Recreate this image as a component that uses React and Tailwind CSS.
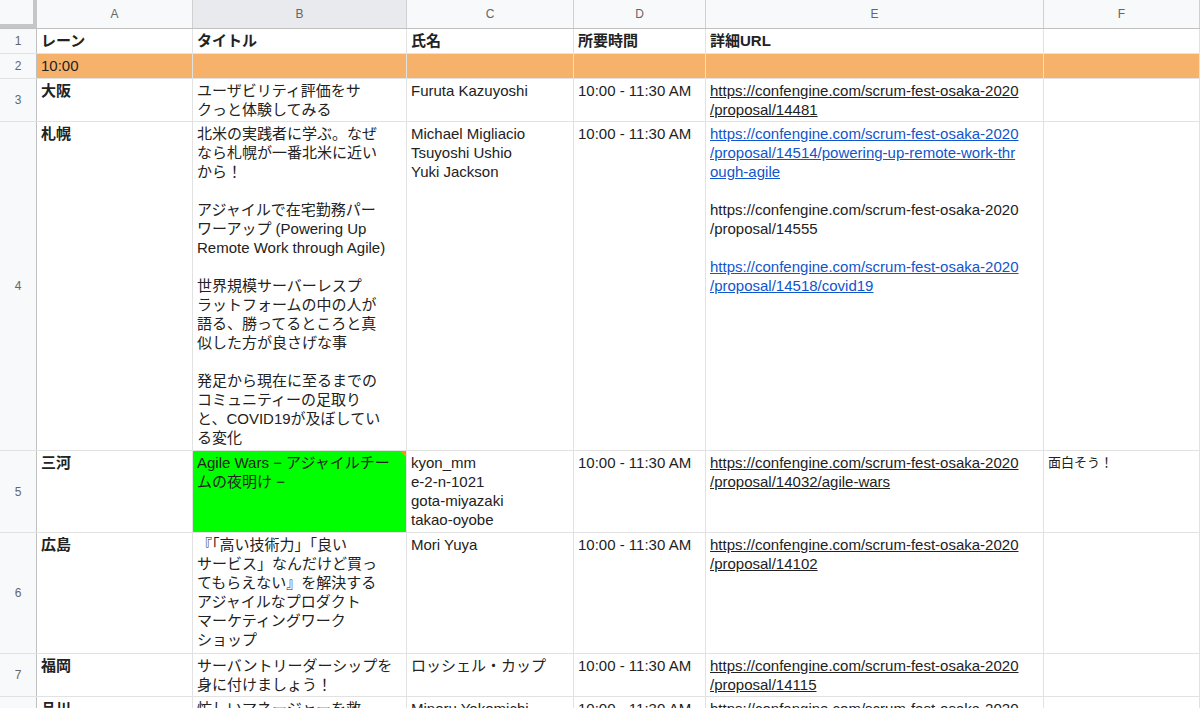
const F = { fontFamily: '"Liberation Sans", "Noto Sans CJK JP", sans-serif' };
const rows = [
  { n: 1, h: 25, cells: [["レーン"], ["タイトル"], ["氏名"], ["所要時間"], ["詳細URL"], [""]], bold: true },
  { n: 2, h: 25, orange: true, cells: [["10:00"], [""], [""], [""], [""], [""]] },
  { n: 3, h: 43, cells: [["大阪"], ["ユーザビリティ評価をサ", "クっと体験してみる"], ["Furuta Kazuyoshi"], ["10:00 - 11:30 AM"], [{ u: 1, t: "https://confengine.com/scrum-fest-osaka-2020" }, { u: 1, t: "/proposal/14481" }], [""]] },
  { n: 4, h: 329, cells: [["札幌"], ["北米の実践者に学ぶ。なぜ", "なら札幌が一番北米に近い", "から！", "", "アジャイルで在宅勤務パー", "ワーアップ (Powering Up", "Remote Work through Agile)", "", "世界規模サーバーレスプ", "ラットフォームの中の人が", "語る、勝ってるところと真", "似した方が良さげな事", "", "発足から現在に至るまでの", "コミュニティーの足取り", "と、COVID19が及ぼしてい", "る変化"], ["Michael Migliacio", "Tsuyoshi Ushio", "Yuki Jackson"], ["10:00 - 11:30 AM"], [{ b: 1, t: "https://confengine.com/scrum-fest-osaka-2020" }, { b: 1, t: "/proposal/14514/powering-up-remote-work-thr" }, { b: 1, t: "ough-agile" }, "", "https://confengine.com/scrum-fest-osaka-2020", "/proposal/14555", "", { b: 1, t: "https://confengine.com/scrum-fest-osaka-2020" }, { b: 1, t: "/proposal/14518/covid19" }], [""]] },
  { n: 5, h: 82, green: true, cells: [["三河"], ["Agile Wars − アジャイルチー", "ムの夜明け −"], ["kyon_mm", "e-2-n-1021", "gota-miyazaki", "takao-oyobe"], ["10:00 - 11:30 AM"], [{ u: 1, t: "https://confengine.com/scrum-fest-osaka-2020" }, { u: 1, t: "/proposal/14032/agile-wars" }], ["面白そう！"]] },
  { n: 6, h: 121, cells: [["広島"], ["『「高い技術力」「良い", "サービス」なんだけど買っ", "てもらえない』を解決する", "アジャイルなプロダクト", "マーケティングワーク", "ショップ"], ["Mori Yuya"], ["10:00 - 11:30 AM"], [{ u: 1, t: "https://confengine.com/scrum-fest-osaka-2020" }, { u: 1, t: "/proposal/14102" }], [""]] },
  { n: 7, h: 43, cells: [["福岡"], ["サーバントリーダーシップを", "身に付けましょう！"], ["ロッシェル・カップ"], ["10:00 - 11:30 AM"], [{ u: 1, t: "https://confengine.com/scrum-fest-osaka-2020" }, { u: 1, t: "/proposal/14115" }], [""]] },
  { n: 8, h: 43, cells: [["品川"], ["忙しいマネージャーを救"], ["Minoru Yokomichi"], ["10:00 - 11:30 AM"], [{ u: 1, t: "https://confengine.com/scrum-fest-osaka-2020" }], [""]] },
];
const widths = [156, 214, 167, 132, 338, 156];
const cols = ["A", "B", "C", "D", "E", "F"];

function Line({ l }) {
  if (typeof l === "string") return <div className="h-[19px] whitespace-nowrap">{l || "\u00a0"}</div>;
  return <div className={"h-[19px] whitespace-nowrap underline " + (l.b ? "text-[#1155cc]" : "")}>{l.t}</div>;
}

export default function App() {
  return (
    <div className="w-[1200px] h-[708px] overflow-hidden bg-white text-[#222] text-[15px]" style={F}>
      <div className="flex h-[29px] border-b border-[#c0c0c0] bg-[#f8f9fa]">
        <div className="w-[37px] shrink-0 border-r-4 border-b-4 border-[#c4c7c5] bg-[#f8f9fa]"></div>
        {cols.map((c, i) => (
          <div key={c} style={{ width: widths[i] }} className={"shrink-0 flex items-center justify-center text-[12px] text-[#666] border-r border-[#d0d0d0] " + (c === "B" ? "bg-[#e8eaed]" : "")}>{c}</div>
        ))}
      </div>
      {rows.map((r) => (
        <div key={r.n} className="flex border-b border-[#e2e2e2]" style={{ height: r.h }}>
          <div className="w-[37px] shrink-0 bg-[#f8f9fa] border-r border-[#c0c0c0] flex items-center justify-center text-[12px] text-[#666]">{r.n}</div>
          {r.cells.map((cell, i) => (
            <div key={i} style={{ width: widths[i] }}
              className={"relative shrink-0 overflow-hidden border-r border-[#e2e2e2] px-[4px] pt-[2px] leading-[19px] " +
                (r.orange ? "bg-[#f6b26b] " : "") + (r.green && i === 1 ? "bg-[#00ff00] " : "") +
                (r.bold || (i === 0 && !r.orange) ? "font-bold " : "") + (i === 5 ? "text-[13px] " : "")}>
              {cell.map((l, j) => <Line key={j} l={l} />)}
              {r.green && i === 1 && <div className="absolute top-0 right-0 w-0 h-0 border-t-[6px] border-l-[6px] border-t-[#f29900] border-l-transparent"></div>}
            </div>
          ))}
        </div>
      ))}
    </div>
  );
}
